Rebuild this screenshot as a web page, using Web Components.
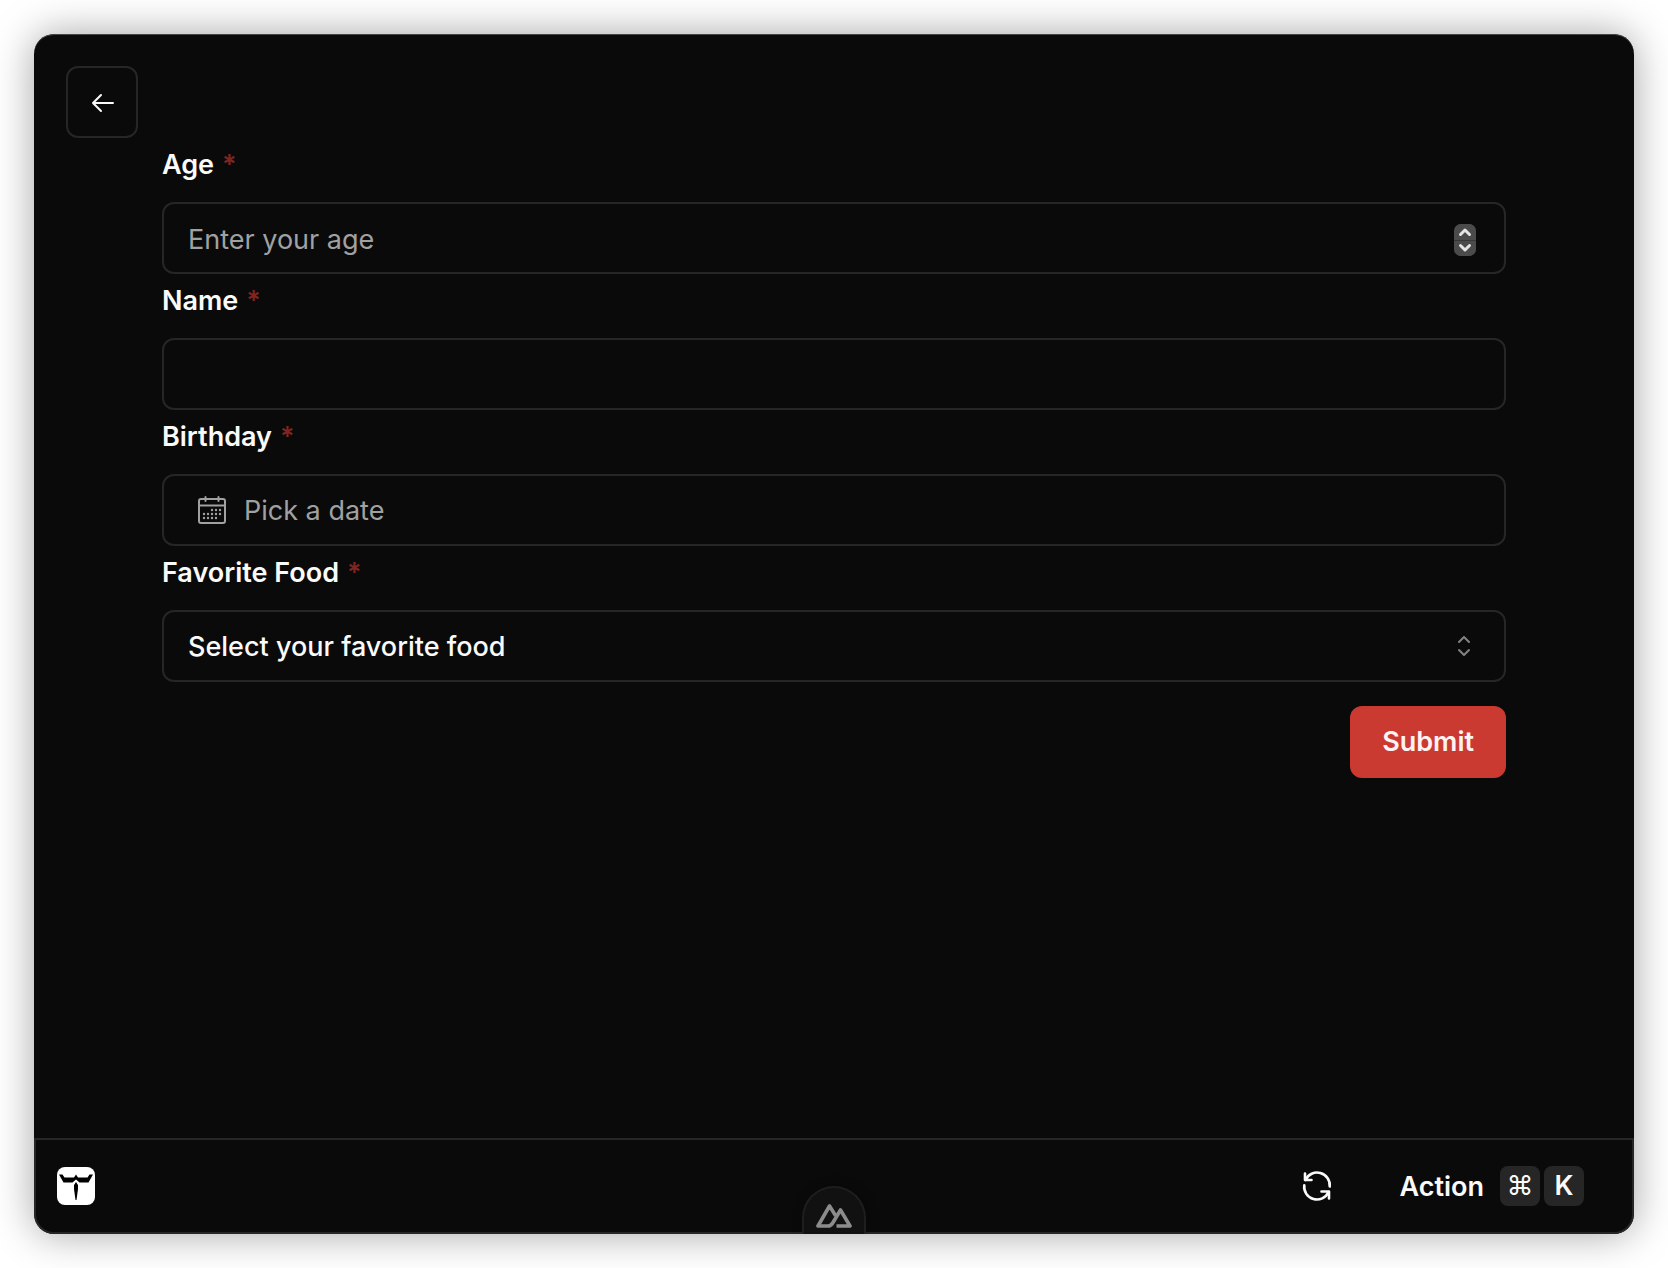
<!DOCTYPE html>
<html lang="en">
<head>
<meta charset="utf-8">
<meta name="viewport" content="width=device-width, initial-scale=1">
<title>Form</title>
<style>
  :root {
    --bg: #0a0a0a;
    --fg: #fafafa;
    --muted: #a1a1a1;
    --border: #262626;
    --danger: #7f2622;
    --primary: #ca3a31;
    --radius: 12px;
    --control: 72px;
  }
  body {
    margin: 0;
    background: #fff;
    color: var(--fg);
    font: 500 27px/40px Inter, "Liberation Sans", sans-serif;
  }
</style>
</head>
<body>
<app-window>
  <icon-back-button></icon-back-button>
  <entry-form></entry-form>
  <status-bar slot="footer"></status-bar>
  <nuxt-badge slot="badge"></nuxt-badge>
</app-window>

<script>
  class BaseElement extends HTMLElement {
    connectedCallback() {
      if (this.shadowRoot) return;
      this.attachShadow({ mode: "open" }).innerHTML =
        `<style>
          *, *::before { box-sizing: border-box; }
          :host { display: block; }
          button, input, select { font: inherit; color: inherit; margin: 0; }
          button { cursor: pointer; }
          svg { display: block; flex: none; }
          ${this.styles()}
        </style>${this.markup()}`;
      this.ready();
    }
    styles() { return ""; }
    markup() { return ""; }
    ready() {}
  }

  customElements.define("app-window", class extends BaseElement {
    styles() {
      return `
        :host { display: flex; min-height: 100vh; padding: 34px; box-sizing: border-box; }
        .frame { position: relative; flex: 1; min-width: 0; display: flex; flex-direction: column;
          background: var(--bg); border-radius: 20px; overflow: hidden; }
        .shade { flex: 1; display: flex; min-width: 0; border-radius: 20px; box-shadow: 0 0 40px rgba(0,0,0,.36); }
        main { flex: 1; padding: 32px; box-shadow: inset 0 1px #454747; border-radius: 20px 20px 0 0; }
      `;
    }
    markup() {
      return `<div class="shade"><div class="frame">
        <main><slot></slot></main>
        <slot name="footer"></slot>
        <slot name="badge"></slot>
      </div></div>`;
    }
  });

  customElements.define("icon-back-button", class extends BaseElement {
    styles() {
      return `
        button { display: flex; align-items: center; justify-content: center; width: var(--control);
          height: var(--control); padding: 0; background: none; border: 2px solid var(--border); border-radius: var(--radius); }
      `;
    }
    markup() {
      return `<button type="button" aria-label="Back">
        <svg width="32" height="32" viewBox="0 0 32 32" fill="none" stroke="currentColor" stroke-width="2" stroke-linecap="round" stroke-linejoin="round">
          <path d="M27 17H7M15 9L7 17L15 25"/></svg></button>`;
    }
  });

  class FormField extends BaseElement {
    styles() {
      return `
        label { display: flex; gap: 8px; line-height: 54px; margin-bottom: 10px; font-weight: 600; }
        label span { color: var(--danger); }
        .control { display: flex; align-items: center; width: 100%; height: var(--control); padding: 2px 24px 0;
          border: 2px solid var(--border); border-radius: var(--radius); background: none; text-align: left; }
        .control:focus-within { border-color: #525252; }
        input { flex: 1; min-width: 0; height: 100%; padding: 0; border: 0; outline: 0; background: none; font-weight: 400; }
        ::placeholder { color: var(--muted); opacity: 1; }
      `;
    }
    markup() {
      return `<label for="field">${this.getAttribute("label")} <span aria-hidden="true">*</span></label>${this.control()}`;
    }
    control() {
      return `<div class="control"><input id="field" type="text" required></div>`;
    }
  }
  customElements.define("text-field", FormField);

  customElements.define("number-field", class extends FormField {
    styles() {
      return super.styles() + `
        .control { padding-right: 28px; }
        input { appearance: textfield; }
        input::-webkit-inner-spin-button { appearance: none; margin: 0; }
        .steps { display: flex; flex-direction: column; gap: 1px; width: 22px; height: 32px;
          border-radius: 7px; overflow: hidden; background: #373737; margin-top: 2px; }
        .steps button { flex: 1; display: flex; align-items: center; justify-content: center; padding: 0;
          border: 0; background: #4b4b4b; color: #e4e4e4; }
      `;
    }
    control() {
      const chevron = (d) => `<svg width="14" height="10" viewBox="0 0 14 10" fill="none" stroke="currentColor" stroke-width="3" stroke-linecap="round" stroke-linejoin="round"><path d="${d}"/></svg>`;
      return `<div class="control">
        <input id="field" type="number" placeholder="${this.getAttribute("placeholder")}" required>
        <div class="steps">
          <button type="button" tabindex="-1" aria-label="Increase">${chevron("M2.5 7.5L7 3L11.5 7.5")}</button>
          <button type="button" tabindex="-1" aria-label="Decrease">${chevron("M2.5 2.5L7 7L11.5 2.5")}</button>
        </div></div>`;
    }
    ready() {
      const input = this.shadowRoot.querySelector("input");
      const [up, down] = this.shadowRoot.querySelectorAll(".steps button");
      up.onclick = () => input.stepUp();
      down.onclick = () => input.stepDown();
    }
  });

  customElements.define("date-field", class extends FormField {
    styles() {
      return super.styles() + `
        .control { padding: 0 32px; gap: 16px; color: var(--muted); font-weight: 400; }
        .control span { padding-top: 2px; }
      `;
    }
    control() {
      const dots = [[16, 16], [20, 16], [24, 16], [8, 20], [12, 20], [16, 20], [20, 20], [24, 20], [8, 24], [12, 24], [16, 24], [20, 24]]
        .map(([x, y]) => `<circle cx="${x}" cy="${y}" r="1.2"/>`).join("");
      return `<button id="field" type="button" class="control">
        <svg width="32" height="32" viewBox="0 0 32 32" fill="currentColor">
          <g fill="none" stroke="currentColor" stroke-width="2"><rect x="3" y="5" width="26" height="24" rx="2"/>
          <path d="M3 11.5H29"/><path d="M9.5 3V7M22.5 3V7" stroke-linecap="round"/></g>${dots}</svg>
        <span>Pick a date</span></button>`;
    }
  });

  customElements.define("select-field", class extends FormField {
    styles() {
      return super.styles() + `
        .wrap { display: grid; align-items: center; }
        .wrap > * { grid-area: 1 / 1; }
        select { appearance: none; outline: 0; color: var(--fg); }
        option { background: var(--bg); }
        svg { justify-self: end; margin-right: 26px; pointer-events: none; color: #828282; }
      `;
    }
    control() {
      return `<div class="wrap"><select id="field" class="control" required>
          <option value="">Select your favorite food</option>
        </select>
        <svg width="32" height="32" viewBox="0 0 32 32" fill="none" stroke="currentColor" stroke-width="2" stroke-linecap="round" stroke-linejoin="round">
          <path d="M11 12L16 7L21 12M11 20L16 25L21 20"/></svg></div>`;
    }
  });

  customElements.define("entry-form", class extends BaseElement {
    styles() {
      return `
        form { display: flex; flex-direction: column; padding: 0 96px; }
        .submit { align-self: flex-end; height: var(--control); margin-top: 24px; padding: 0 32px; border: 0;
          border-radius: var(--radius); background: var(--primary); color: #fef2f2; font-weight: 600; }
      `;
    }
    markup() {
      return `<form>
        <number-field label="Age" placeholder="Enter your age"></number-field>
        <text-field label="Name"></text-field>
        <date-field label="Birthday"></date-field>
        <select-field label="Favorite Food"></select-field>
        <button class="submit" type="submit">Submit</button>
      </form>`;
    }
    ready() {
      this.shadowRoot.querySelector("form").addEventListener("submit", (e) => e.preventDefault());
    }
  });

  customElements.define("key-cap", class extends BaseElement {
    styles() {
      return `
        :host { display: inline-flex; }
        kbd { display: flex; align-items: center; justify-content: center; width: 40px; height: 40px;
          border-radius: 8px; background: var(--border); font: inherit; }
      `;
    }
    markup() { return `<kbd><slot></slot></kbd>`; }
  });

  customElements.define("status-bar", class extends BaseElement {
    styles() {
      return `
        footer { display: flex; align-items: center; height: 96px; padding: 0 48px 0 21px;
          border: 2px solid var(--border); border-radius: 0 0 20px 20px; }
        .actions { display: flex; align-items: center; gap: 66px; margin-left: auto; }
        button { display: flex; align-items: center; padding: 0; border: 0; background: none; }
        .action { gap: 4px; font-weight: 600; }
        .action span { margin-right: 12px; padding-top: 2px; }
        .symbol { font-weight: 400; }
      `;
    }
    markup() {
      return `<footer>
        <svg width="38" height="38" viewBox="0 0 38 38" role="img" aria-label="Logo">
          <rect width="38" height="38" rx="8" fill="#fff"/>
          <path fill="#000" d="M2 7.5H5.5L7.5 10.5H17L19 7.5L21 10.5H30.500L32.500 7.5H36L31.5 15.5H22.500L19 12.5L15.500 15.5H6.5Z"/>
          <path fill="#000" d="M19 15L21 18V22L19.5 33H18.5L17 22V18Z"/></svg>
        <div class="actions">
          <button type="button" aria-label="Refresh">
            <svg width="32" height="32" viewBox="0 0 32 32" fill="none" stroke="currentColor" stroke-width="2.6" stroke-linecap="round" stroke-linejoin="round">
              <path d="M4 3.500V10H10.500"/><path d="M4.500 10A12.700 12.700 0 0 1 28.700 16.500"/>
              <path d="M3.300 15.200A12.700 12.700 0 0 0 27.500 22"/><path d="M20.500 21.500H28V28.500"/></svg></button>
          <button type="button" class="action"><span>Action</span><key-cap class="symbol">⌘</key-cap><key-cap>K</key-cap></button>
        </div>
      </footer>`;
    }
  });

  customElements.define("nuxt-badge", class extends BaseElement {
    styles() {
      return `
        :host { position: absolute; left: 50%; bottom: 0; transform: translateX(-50%); }
        button { display: flex; justify-content: center; width: 64px; height: 48px; padding: 16px 0 0;
          border: 2px solid #1e1e1e; border-bottom: 0; border-radius: 32px 32px 0 0; background: #111; color: #8c8c8c;
          box-shadow: 2px 0 12px rgba(0,0,0,.3); }
      `;
    }
    markup() {
      return `<button type="button" aria-label="Nuxt DevTools">
        <svg width="36" height="24" viewBox="0 0 36 24" fill="none" stroke="currentColor" stroke-width="3.6" stroke-linejoin="round">
          <path d="M19.5 11.5L13.5 2L2 22H12Q15 22 17 18.5L24.5 6L34 22H20.5"/></svg></button>`;
    }
  });
</script>
</body>
</html>
